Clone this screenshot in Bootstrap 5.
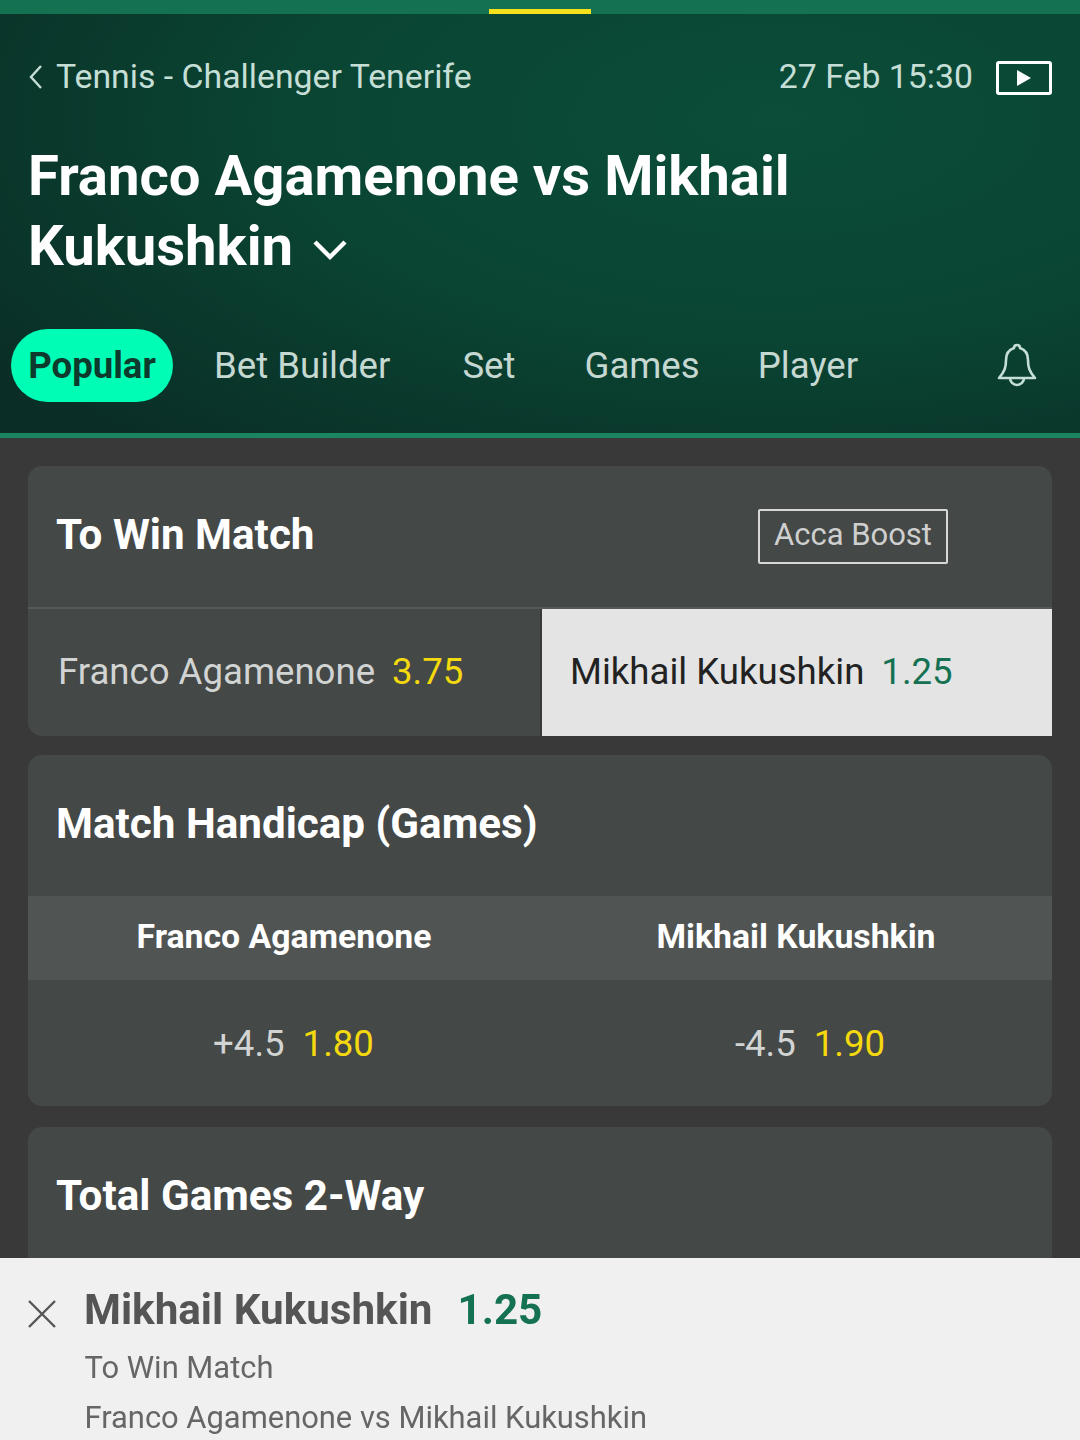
<!DOCTYPE html>
<html lang="en">
<head>
<meta charset="utf-8">
<title>Franco Agamenone vs Mikhail Kukushkin</title>
<link href="https://cdn.jsdelivr.net/npm/bootstrap@5.3.0/dist/css/bootstrap.min.css" rel="stylesheet">
<style>
html,body{height:1440px;overflow:hidden}
body{font-family:Roboto,"Liberation Sans",sans-serif;background:#393939;color:#fff}
.progress-strip{height:14px;background:#147252}
.progress-mark{width:102px;height:5px;margin-top:9px;background:#f5e11b}
.match-head{height:424px;background:radial-gradient(ellipse 950px 430px at 72% 25%,#0a4d39 0%,#0a4533 50%,#0a2e26 100%);border-bottom:5px solid #1b8460}
.crumb-row{padding:26px 28px 0 28px;height:100px}
.crumb-text{font-size:33.8px;line-height:40px;color:#c5dfd6}
.back-ico{width:16px;height:26px;margin-right:12px}
.play-box{width:56px;height:34px;border:3px solid #fff;border-radius:3px;margin-left:23px;margin-top:2px}
.match-title{font-size:56.25px;line-height:70px;font-weight:700;color:#fff;margin:27px 0 0;padding:0 28px}
.chev-ico{width:36px;height:24px;margin-left:19px}
.tab-row{position:relative;height:74px;margin-top:47px;padding-left:11px}
.tab-pill{height:73px;width:162px;border-radius:37px;background:#00fdb6;color:#0e3a2d;font-size:36.6px;font-weight:700;line-height:73px;padding-top:1px}
.tab-item{font-size:36.6px;color:#c5d8d2;line-height:75px}
.tab-a{margin-left:41px}.tab-b{margin-left:72px}.tab-c{margin-left:69px}.tab-d{margin-left:58px}
.bell-ico{width:42px;height:46px;margin-left:auto;margin-right:42px}
.market-list{padding:28px 28px 0}
.market-box{background:#444846;border-radius:14px;margin-bottom:19px}
.market-box-b{margin-bottom:21px}
.market-head{height:141px;padding:0 28px 4px 28px}
.market-title{font-size:42.2px;font-weight:700;color:#fff;margin:0;line-height:50px}
.boost-tag{border:2px solid #d8d8d8;border-radius:2px;width:190px;height:55px;font-size:31px;color:#cfcfcf;margin-left:auto;margin-right:76px;margin-top:4px;padding-bottom:2px}
.bet-row{border-top:2px solid #555957;height:129px}
.bet-cell{width:50%;padding-left:30px;font-size:36.6px;color:#d2d4d3}
.bet-on{background:#e4e4e4;color:#222;border-left:2px solid #393939;padding-left:28px}
.price{color:#f5d90f;margin-left:17px}
.price-on{color:#147252}
.side-row{height:84px;background:#505452;font-size:33.8px;font-weight:700;color:#fff;padding-bottom:2px}
.hcp-row{height:126px;font-size:36.6px;color:#d2d4d3;padding-top:2px}
.hcp-left{padding-left:19px}
.hcp-right{padding-left:28px}
.hcp-row .price{margin-left:18px}
.slip{position:fixed;left:0;right:0;bottom:0;height:182px;background:#f0f0f0;color:#555;padding:24px 27px 0}
.slip-x{width:30px;height:30px;margin-top:17px;margin-right:27px}
.slip-name{font-size:42.2px;font-weight:700;line-height:56px;color:#555}
.slip-price{color:#147252;margin-left:25px}
.slip-line{font-size:30.9px;line-height:50px;color:#666;padding-left:.5px}
.slip-first{margin-top:5px}
</style>
</head>
<body>
<div class="progress-strip d-flex justify-content-center"><div class="progress-mark"></div></div>
<header class="match-head">
  <div class="crumb-row d-flex align-items-center justify-content-between">
    <div class="d-flex align-items-center crumb-text">
      <svg class="back-ico" viewBox="0 0 16 26" fill="none" stroke="#c5dfd6" stroke-width="2.4"><path d="M13 2 3 13l10 11"/></svg>Tennis - Challenger Tenerife
    </div>
    <div class="d-flex align-items-center crumb-text">27 Feb 15:30
      <div class="play-box d-flex align-items-center justify-content-center"><svg width="14" height="16" viewBox="0 0 14 16"><path d="M0 0 14 8 0 16z" fill="#fff"/></svg></div>
    </div>
  </div>
  <h1 class="match-title">Franco Agamenone vs Mikhail<br>Kukushkin<svg class="chev-ico" viewBox="0 0 36 24" fill="none" stroke="#fff" stroke-width="4.4"><path d="M3 4l15 15L33 4"/></svg></h1>
  <div class="tab-row d-flex align-items-center">
    <div class="tab-pill d-flex align-items-center justify-content-center">Popular</div>
    <div class="tab-item tab-a">Bet Builder</div>
    <div class="tab-item tab-b">Set</div>
    <div class="tab-item tab-c">Games</div>
    <div class="tab-item tab-d">Player</div>
    <svg class="bell-ico" viewBox="0 0 42 46" fill="none" stroke="#c5dfd6" stroke-width="2.6" stroke-linejoin="round"><path d="M21 3c-2 0-3 1-3 3-6 2-8 6-8 12 0 7-1 11-7 18h36c-6-7-7-11-7-18 0-6-2-10-8-12 0-2-1-3-3-3z"/><path d="M14 36a7 7 0 0 0 14 0"/></svg>
  </div>
</header>
<main class="market-list">
  <section class="market-box">
    <div class="market-head d-flex align-items-center">
      <h2 class="market-title">To Win Match</h2>
      <div class="boost-tag d-flex align-items-center justify-content-center">Acca Boost</div>
    </div>
    <div class="bet-row d-flex">
      <div class="bet-cell d-flex align-items-center">Franco Agamenone<span class="price">3.75</span></div>
      <div class="bet-cell bet-on d-flex align-items-center">Mikhail Kukushkin<span class="price price-on">1.25</span></div>
    </div>
  </section>
  <section class="market-box market-box-b">
    <div class="market-head d-flex align-items-center"><h2 class="market-title">Match Handicap (Games)</h2></div>
    <div class="side-row row g-0 align-items-center text-center">
      <div class="col-6">Franco Agamenone</div><div class="col-6">Mikhail Kukushkin</div>
    </div>
    <div class="hcp-row row g-0 align-items-center text-center">
      <div class="col-6 hcp-left">+4.5<span class="price">1.80</span></div><div class="col-6 hcp-right">-4.5<span class="price">1.90</span></div>
    </div>
  </section>
  <section class="market-box">
    <div class="market-head d-flex align-items-center"><h2 class="market-title">Total Games 2-Way</h2></div>
  </section>
</main>
<aside class="slip d-flex">
  <svg class="slip-x flex-shrink-0" viewBox="0 0 30 30" stroke="#555" stroke-width="2.4"><path d="M2 2l26 26M28 2 2 28"/></svg>
  <div>
    <div class="slip-name">Mikhail Kukushkin<span class="slip-price">1.25</span></div>
    <div class="slip-line slip-first">To Win Match</div>
    <div class="slip-line">Franco Agamenone vs Mikhail Kukushkin</div>
  </div>
</aside>
<script src="https://cdn.jsdelivr.net/npm/bootstrap@5.3.0/dist/js/bootstrap.bundle.min.js"></script>
</body>
</html>
